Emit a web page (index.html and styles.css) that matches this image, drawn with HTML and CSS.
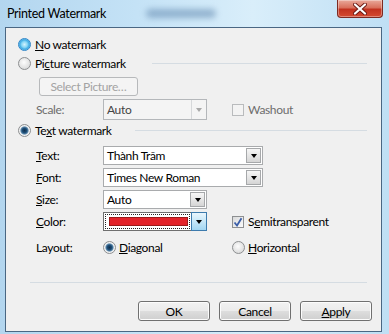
FILE: index.html
```html
<!DOCTYPE html>
<html>
<head>
<meta charset="utf-8">
<title>Printed Watermark</title>
<link rel="stylesheet" href="styles.css">
</head>
<body>
<div class="window">
	<div class="titlebar">
		<span class="title">Printed Watermark</span>
		<span class="glass"></span>
		<button class="close" type="button">
			<svg width="14" height="12" viewBox="0 0 14 12"><path d="M2 1.5L12 10.5M12 1.5L2 10.5" stroke="#6b1a14" stroke-width="4" stroke-linecap="round"/><path d="M2 1.5L12 10.5M12 1.5L2 10.5" stroke="#fff" stroke-width="2.2" stroke-linecap="round"/></svg>
		</button>
	</div>

	<div class="client">
		<div class="opt first">
			<span class="radio hot"></span>
			<span class="lbl"><u>N</u>o watermark</span>
		</div>
		<div class="opt">
			<span class="radio"></span>
			<span class="lbl">Pi<u>c</u>ture watermark</span>
			<span class="sep sep-pic"></span>
		</div>

		<div class="pick-btn">Select Picture…</div>

		<div class="field scale">
			<span class="name off">Scale:</span>
			<div class="combo off">
				<span class="val">Auto</span>
				<span class="drop"><i class="arrow"></i></span>
			</div>
			<span class="check off"></span>
			<span class="lbl off">Washout</span>
		</div>

		<div class="opt">
			<span class="radio on"></span>
			<span class="lbl">Te<u>x</u>t watermark</span>
			<span class="sep sep-text"></span>
		</div>

		<div class="fields">
			<div class="field">
				<span class="name"><u>T</u>ext:</span>
				<div class="combo wide">
					<span class="val">Thành Trăm</span>
					<span class="drop"><i class="arrow"></i></span>
				</div>
			</div>
			<div class="field">
				<span class="name"><u>F</u>ont:</span>
				<div class="combo wide">
					<span class="val">Times New Roman</span>
					<span class="drop"><i class="arrow"></i></span>
				</div>
			</div>
			<div class="field">
				<span class="name"><u>S</u>ize:</span>
				<div class="combo">
					<span class="val">Auto</span>
					<span class="drop"><i class="arrow"></i></span>
				</div>
			</div>
			<div class="field">
				<span class="name"><u>C</u>olor:</span>
				<div class="combo focus">
					<span class="swatch-box"><span class="swatch"></span></span>
					<span class="drop hot"><i class="arrow"></i></span>
				</div>
				<span class="check">
					<svg width="10" height="10" viewBox="0 0 10 10"><path d="M1.5 5.5L4 8.5L8.5 1.2" fill="none" stroke="#3b5ea8" stroke-width="1.8"/></svg>
				</span>
				<span class="lbl">S<u>e</u>mitransparent</span>
			</div>
		</div>

		<div class="field layout">
			<span class="name">Layout:</span>
			<div class="choice">
				<span class="radio on"></span>
				<span class="lbl"><u>D</u>iagonal</span>
			</div>
			<div class="choice">
				<span class="radio"></span>
				<span class="lbl"><u>H</u>orizontal</span>
			</div>
		</div>

		<div class="sep bottom"></div>

		<div class="buttons">
			<button class="btn" type="button">OK</button>
			<button class="btn" type="button">Cancel</button>
			<button class="btn" type="button"><u>A</u>pply</button>
		</div>
	</div>
</div>
</body>
</html>
```

FILE: styles.css
```css
*{ margin:0; padding:0; box-sizing:border-box;}
body{ width:389px; height:334px; overflow:hidden; font:12px Lato,"Open Sans",Arial,sans-serif; letter-spacing:-0.35px; color:#000;}
u{ text-decoration:underline; text-underline-offset:1px;}

/* frame */
.window{ width:389px; height:334px; display:flex; flex-direction:column; background:linear-gradient(90deg,#b3d6ef 0%,#c4e2f6 35%,#d9eefa 65%,#bfdff4 100%);}
.titlebar{ height:27px; display:flex; align-items:center; padding-left:7px;}
.title{ font-size:12.5px; letter-spacing:-0.3px; color:#000;}
.glass{ width:70px; height:9px; margin-left:40px; background:#5f86ad; opacity:.55; filter:blur(3px); border-radius:5px;}
.close{ margin-left:auto; margin-right:6px; align-self:flex-start; width:46px; height:18px; border:1px solid #7d2a22; border-top:none; border-radius:0 0 4px 4px; background:linear-gradient(#e9a99b 0%,#d9705c 45%,#c2321f 55%,#d44a30 100%); display:flex; align-items:center; justify-content:center; box-shadow:inset 0 0 0 1px rgba(255,255,255,.35);}

.client{ flex:1; margin:0 7px 2px 5px; border:1px solid #4a6783; background:#f0f0f0; display:flex; flex-direction:column; padding-top:7px;}

/* radio rows */
.opt{ display:flex; align-items:center; height:18px; padding-left:12px; margin-top:1px;}
.opt.first{ margin-top:0;}
.lbl{ margin-left:4px; white-space:nowrap;}
.lbl.off, .name.off{ color:#6d6d6d;}
.sep{ height:1px; background:#d5dce2;}
.sep-pic{ margin-left:auto; margin-right:14px; width:215px;}
.sep-text{ margin-left:auto; margin-right:14px; width:232px;}

.radio{ flex:none; width:13px; height:13px; border-radius:50%; border:1px solid #8d8f91; background:radial-gradient(circle at 45% 40%,#fdfdfd 0,#e9e9e9 45%,#cfd0d1 100%);}
.radio.hot{ border-color:#2f86c8; background:radial-gradient(circle,#d4f3fd 0,#86d6f5 38%,#3aa8e2 62%,#bfe8fa 80%,#e9f8fe 100%);}
.radio.on{ background:radial-gradient(circle,#0f2f4d 0,#1f4f79 2.4px,#5c88ab 3.6px,#f5f5f5 4.6px,#dedfe0 100%);}

.check{ flex:none; width:12px; height:12px; margin-left:25px; border:1px solid #8d8f91; background:linear-gradient(135deg,#d9dadb,#fbfbfb); display:flex; align-items:center; justify-content:center;}
.check.off{ border-color:#b9bbbd; background:#f3f3f3;}

/* picture */
.pick-btn{ margin:5px 0 0 33px; width:99px; height:19px; border:1px solid #b7b9bb; border-radius:3px; background:#f4f4f4; color:#a3a3a3; display:flex; align-items:center; justify-content:center;}

/* fields */
.field{ display:flex; align-items:center; height:19px; padding-left:30px;}
.field.scale{ margin-top:3px; height:21px;}
.fields{ margin-top:7px; display:flex; flex-direction:column; gap:3px;}
.name{ width:67px; flex:none;}

.combo{ width:104px; height:19px; border:1px solid #a9abad; background:#fff; display:flex; align-items:stretch; flex:none;}
.combo.wide{ width:160px;}
.combo.off{ height:21px; background:#f4f4f4; border-color:#b4b7ba; color:#444;}
.combo .val{ flex:1; padding-left:3px; display:flex; align-items:center; white-space:nowrap; overflow:hidden;}
.drop{ width:15px; margin:1px; border:1px solid #a6a8aa; background:linear-gradient(#f6f6f6,#e6e6e6 50%,#d5d5d5); display:flex; align-items:center; justify-content:center;}
.combo.off .drop{ border:none; border-left:1px solid #d6d8da; background:#f4f4f4; margin:0;}
.combo.off .arrow{ border-top-color:#a8a8a8;}
.drop.hot{ width:16px; margin:-1px -1px -1px 1px; border-color:#3d7bad; background:linear-gradient(#eaf6fd,#c6e7f8 50%,#a2d6f2);}
.arrow{ width:0; height:0; border-left:3.5px solid transparent; border-right:3.5px solid transparent; border-top:4px solid #000;}

.combo.focus{ border-color:#6f6f6f;}
.swatch-box{ flex:1; margin:1px 0 1px 1px; border:1px dotted #222; padding:2px 1px 2px 3px; display:flex;}
.swatch{ flex:1; background:#e3232a; border:1px solid #9c1a1a;}

.field.layout{ margin-top:7px; height:18px;}
.choice{ width:129px; display:flex; align-items:center; flex:none;}
.choice .lbl{ margin-left:3px;}

.sep.bottom{ margin:26px 14px 0 24px;}

.buttons{ margin-top:18px; padding-right:9px; display:flex; justify-content:flex-end; gap:9px;}
.btn{ width:72px; height:20px; border:1px solid #707070; border-radius:3px; background:linear-gradient(#f2f2f2 0%,#ebebeb 48%,#dddddd 52%,#cfcfcf 100%); font:12px Lato,"Open Sans",Arial,sans-serif; letter-spacing:-0.35px; color:#000; box-shadow:inset 0 0 0 1px #fcfcfc;}
```
